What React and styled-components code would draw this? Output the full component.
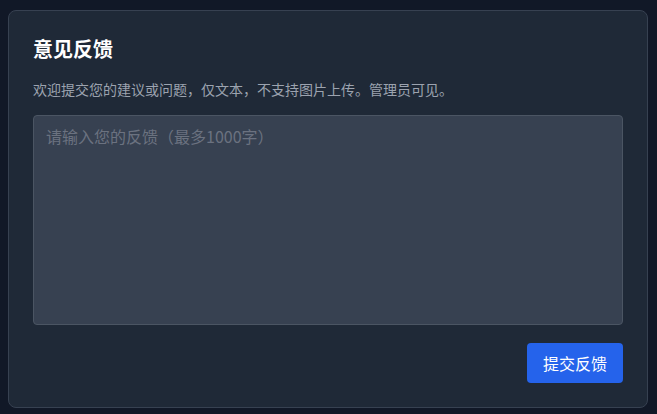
import React from "react";
import styled, { createGlobalStyle } from "styled-components";

const Global = createGlobalStyle`
  html, body { background: #111827; }
  body {
    margin: 0;
    padding: 10px 9px 7px 8px;
    font-family: "Noto Sans CJK SC", "Noto Sans", sans-serif;
  }
  * { box-sizing: border-box; }
`;

const Card = styled.div`
  background: #1f2937;
  border: 1px solid #374151;
  border-radius: 8px;
  padding: 24px;
  display: flex;
  flex-direction: column;
`;

const Title = styled.h2`
  margin: 0;
  font-size: 20px;
  line-height: 28px;
  font-weight: 700;
  color: #ffffff;
`;

const Desc = styled.p`
  margin: 16px 0 0;
  font-size: 14px;
  line-height: 20px;
  color: #9ca3af;
`;

const TextArea = styled.textarea`
  margin-top: 16px;
  height: 210px;
  width: 100%;
  resize: none;
  background: #374151;
  border: 1px solid #4b5563;
  border-radius: 4px;
  padding: 8px 12px;
  font-family: inherit;
  font-size: 16px;
  line-height: 24px;
  color: #f3f4f6;
  outline: none;
  &::placeholder { color: #6b7280; }
`;

const Footer = styled.div`
  margin-top: 18px;
  display: flex;
  justify-content: flex-end;
`;

const Button = styled.button`
  width: 96px;
  height: 40px;
  background: #2563eb;
  color: #ffffff;
  border: none;
  border-radius: 4px;
  font-family: inherit;
  font-size: 16px;
  cursor: pointer;
`;

export default function App() {
  return (
    <>
      <Global />
      <Card>
        <Title>意见反馈</Title>
        <Desc>欢迎提交您的建议或问题，仅文本，不支持图片上传。管理员可见。</Desc>
        <TextArea placeholder="请输入您的反馈（最多1000字）" />
        <Footer>
          <Button>提交反馈</Button>
        </Footer>
      </Card>
    </>
  );
}
